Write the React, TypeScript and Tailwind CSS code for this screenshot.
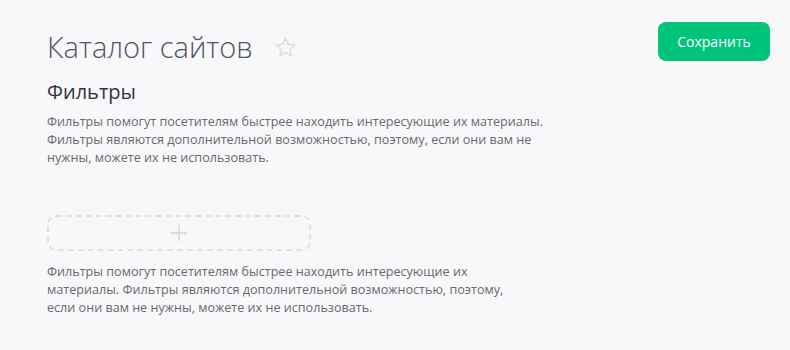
export default function App() {
  return (
    <div
      className="min-h-[350px] w-[790px] bg-[#f8f8fa] px-[47px] pt-[22px]"
      style={{ fontFamily: '"Open Sans", "Noto Sans", sans-serif' }}
    >
      <div className="flex items-start justify-between">
        <div className="flex items-center gap-[21px] pt-[5px]">
          <h1 className="text-[29px] leading-[40px] font-light text-[#4f5563]">
            Каталог сайтов
          </h1>
          <svg width="23" height="23" viewBox="0 0 24 24" fill="none" stroke="#dcdde2" strokeWidth="1.5" strokeLinejoin="round">
            <path d="M12 2.5l2.9 6.2 6.6.7-4.9 4.5 1.4 6.6L12 17.2l-5.9 3.3 1.4-6.6-4.9-4.5 6.6-.7z" />
          </svg>
        </div>
        <button className="-mr-[27px] h-[39px] w-[112px] rounded-[8px] bg-[#00c47c] text-[14px] text-white">
          Сохранить
        </button>
      </div>

      <h2 className="mt-[12px] text-[20px] leading-[26px] text-[#33363e]">Фильтры</h2>
      <p className="mt-[8px] w-[520px] text-[12.6px] leading-[18px] text-[#67696f]">
        Фильтры помогут посетителям быстрее находить интересующие их материалы.
        Фильтры являются дополнительной возможностью, поэтому, если они вам не
        нужны, можете их не использовать.
      </p>

      <button className="mt-[48px] flex h-[36px] w-[264px] items-center justify-center rounded-[9px] border-2 border-dashed border-[#e2e2e6]">
        <svg width="18" height="18" viewBox="0 0 18 18" stroke="#d4d5da" strokeWidth="1.5">
          <path d="M9 1v16M1 9h16" />
        </svg>
      </button>
      <p className="mt-[12px] w-[470px] text-[12.6px] leading-[18px] text-[#67696f]">
        Фильтры помогут посетителям быстрее находить интересующие их
        материалы. Фильтры являются дополнительной возможностью, поэтому,
        если они вам не нужны, можете их не использовать.
      </p>
    </div>
  );
}
